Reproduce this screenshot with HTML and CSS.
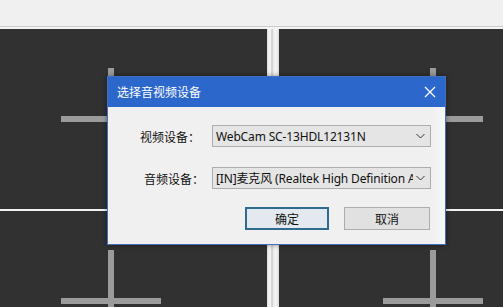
FILE: index.html
```html
<!DOCTYPE html>
<html lang="zh-CN">
<head>
<meta charset="utf-8">
<title>选择音视频设备</title>
<link rel="stylesheet" href="styles.css">
</head>
<body>
<div class="screen">
  <div class="topbar"></div>
  <div class="grid">
    <div class="cell cell-left"><div class="cross"><span class="h"></span><span class="v"></span></div></div>
    <div class="vdiv"></div>
    <div class="cell cell-right"><div class="cross"><span class="h"></span><span class="v"></span></div></div>
    <div class="hdiv"></div>
    <div class="hdiv mid"></div>
    <div class="hdiv"></div>
    <div class="cell cell-left"><div class="cross"><span class="h"></span><span class="v"></span></div></div>
    <div class="vdiv"></div>
    <div class="cell cell-right"><div class="cross"><span class="h"></span><span class="v"></span></div></div>
  </div>

  <div class="dialog">
    <div class="titlebar">
      <span class="title">选择音视频设备</span>
      <svg class="close" width="12" height="12" viewBox="0 0 12 12"><path d="M1 1L11 11M11 1L1 11" stroke="#fff" stroke-width="1.3" fill="none"/></svg>
    </div>
    <div class="body">
      <div class="row row1">
        <span class="label l1">视频设备：</span>
        <div class="combo">
          <span class="val">WebCam SC-13HDL12131N</span>
          <svg class="chev" width="9" height="6" viewBox="0 0 9 6"><path d="M0.5 1L4.5 5L8.5 1" stroke="#333" stroke-width="1" fill="none"/></svg>
        </div>
      </div>
      <div class="row row2">
        <span class="label l2">音频设备：</span>
        <div class="combo">
          <span class="val">[IN]麦克风 (Realtek High Definition Audio)</span>
          <svg class="chev" width="9" height="6" viewBox="0 0 9 6"><path d="M0.5 1L4.5 5L8.5 1" stroke="#333" stroke-width="1" fill="none"/></svg>
        </div>
      </div>
      <div class="buttons">
        <button class="btn ok">确定</button>
        <button class="btn">取消</button>
      </div>
    </div>
  </div>
</div>
</body>
</html>
```

FILE: styles.css
```css
* { box-sizing: border-box; }
html, body { margin: 0; padding: 0; }
body {
  width: 503px;
  height: 307px;
  overflow: hidden;
  background: #313131;
  font-family: "Noto Sans CJK SC", sans-serif;
}
.screen {
  position: relative;
  width: 503px;
  height: 307px;
  overflow: hidden;
}
.topbar {
  height: 26px;
  background: #f0f0f0;
}
.grid {
  display: grid;
  grid-template-columns: 267px 12px 224px;
  grid-template-rows: 180px 2px 180px;
  border-top: 1px solid #cbcbcb;
  box-shadow: inset 0 2px 0 #f4f4f4;
  padding-top: 2px;
}
.cell {
  background: #313131;
  display: flex;
  align-items: center;
}
.cell-left { padding-left: 61px; }
.cell-right { padding-left: 104px; }
.vdiv {
  background: linear-gradient(90deg, #dcdcdc 0, #f2f2f2 2px, #f2f2f2 4px, #bdbdbd 5px, #e9e9e9 6px, #f6f6f6 9px, #dadada 12px);
}
.hdiv { background: #f2f2f2; }
.hdiv.mid { background: #e6e6e6; }
.cross {
  position: relative;
  width: 100px;
  height: 102px;
  flex: none;
}
.cross .h {
  position: absolute;
  left: 0; top: 48px;
  width: 100px; height: 6px;
  background: #9b9b9b;
}
.cross .v {
  position: absolute;
  left: 47px; top: 0;
  width: 6px; height: 102px;
  background: #9b9b9b;
}

.dialog {
  position: absolute;
  left: 107px;
  top: 76px;
  width: 339px;
  height: 169px;
  background: #f0f0f0;
  border: 1px solid #3f6fbf;
  box-shadow: 0 0 5px rgba(0,0,0,0.4);
  display: flex;
  flex-direction: column;
}
.titlebar {
  height: 30px;
  background: #2c67cc;
  display: flex;
  align-items: center;
  padding: 0 9px 0 9px;
  color: #fff;
}
.title {
  font-size: 12px;
  flex: 1;
  padding-bottom: 1px;
}
.body {
  flex: 1;
  padding-top: 18px;
  display: flex;
  flex-direction: column;
  background: linear-gradient(90deg, #f0f0f0 0, #f0f0f0 326px, #f7f9fb 337px);
}
.row {
  display: flex;
  align-items: center;
  height: 22px;
  padding-right: 14px;
}
.row2 { margin-top: 20px; }
.label {
  font-size: 12px;
  color: #111;
}
.l1 { padding-left: 32px; }
.l2 { padding-left: 36px; }
.combo {
  margin-left: auto;
  width: 219px;
  height: 22px;
  border: 1px solid #adadad;
  background: #e5e5e5;
  display: flex;
  align-items: center;
  padding: 0 5px 0 3px;
  overflow: hidden;
}
.val {
  flex: 1;
  white-space: nowrap;
  overflow: hidden;
  font-family: "Noto Sans", "Noto Sans CJK SC", sans-serif;
  font-size: 12px;
  letter-spacing: -0.15px;
  color: #111;
}
.chev { flex: none; margin-left: 3px; }
.buttons {
  display: flex;
  justify-content: flex-end;
  gap: 15px;
  padding-right: 15px;
  margin-top: 18px;
}
.btn {
  width: 86px;
  height: 23px;
  border: 1px solid #adadad;
  background: #e1e1e1;
  font-family: "Noto Sans CJK SC", sans-serif;
  font-size: 12px;
  color: #111;
  padding: 0;
}
.btn.ok {
  width: 84px;
  border: 2px solid #2f6b8e;
  background: #e3e9ee;
}
```
